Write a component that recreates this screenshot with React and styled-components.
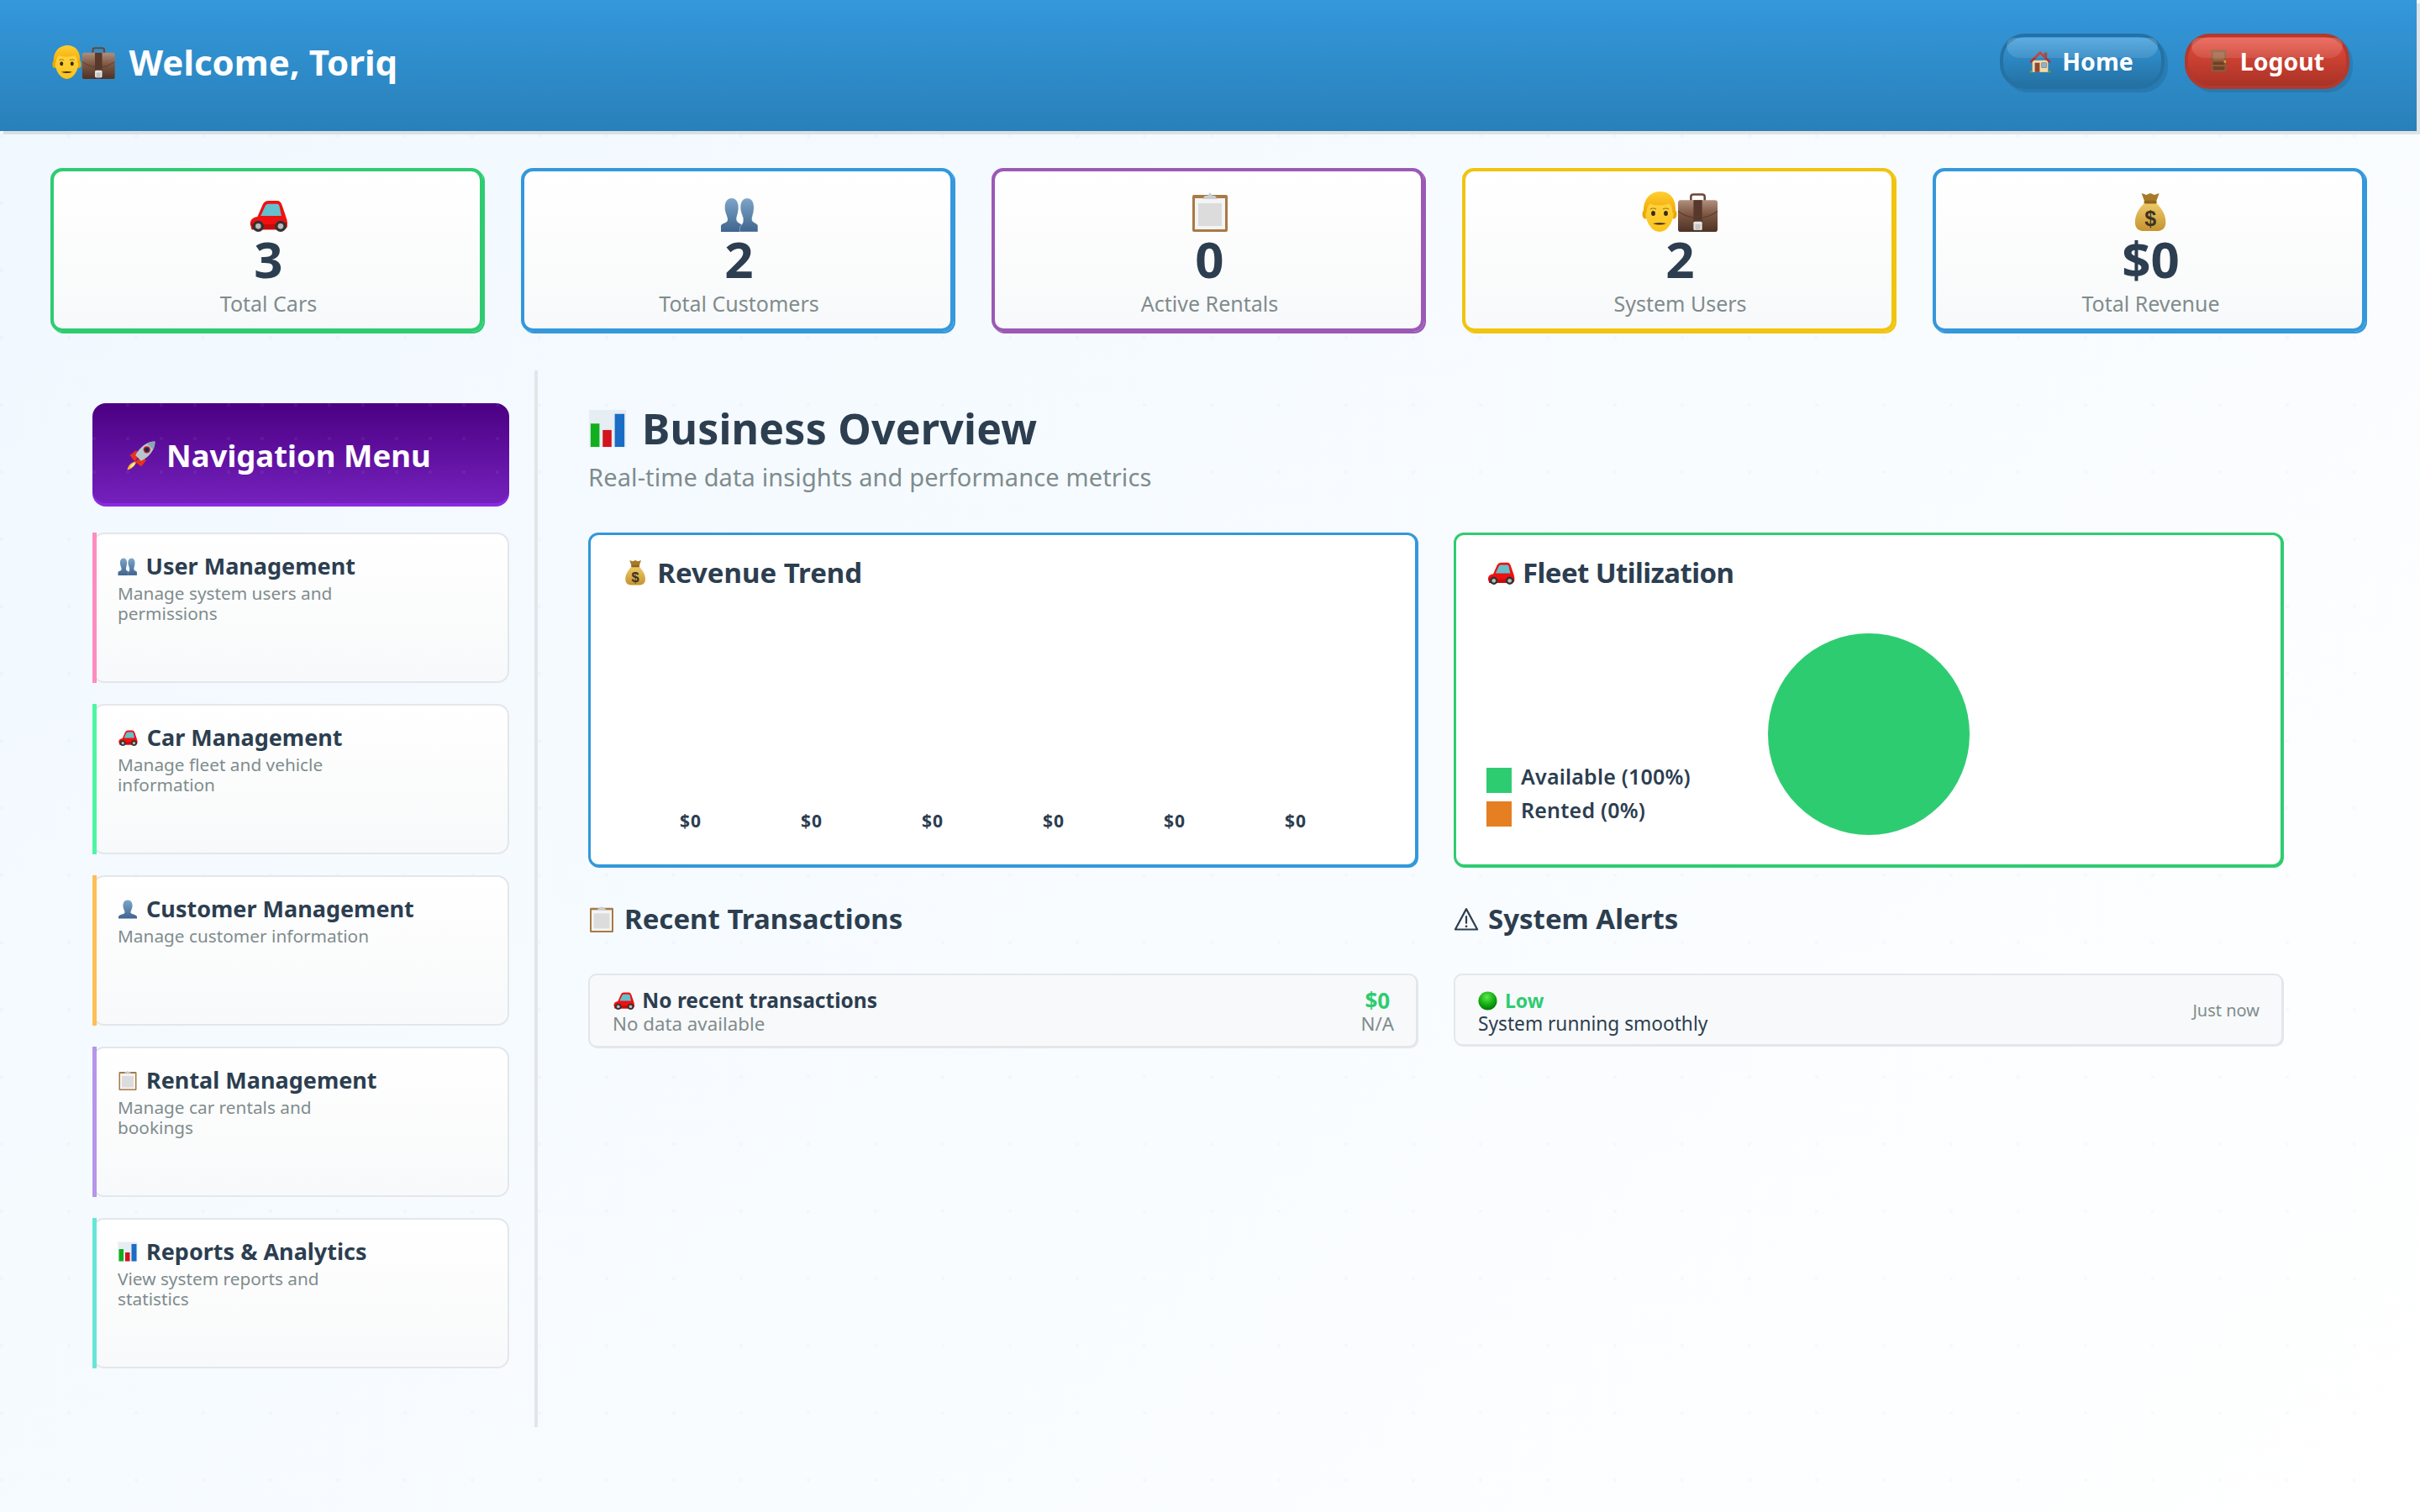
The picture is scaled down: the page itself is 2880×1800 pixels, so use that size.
import React from "react";
import styled, { createGlobalStyle } from "styled-components";

const GlobalStyle = createGlobalStyle`
  html, body {
    margin: 0;
    padding: 0;
    overflow: hidden;
  }
  body {
    font-family: "Noto Sans", "DejaVu Sans", sans-serif;
    color: #2c3e50;
    background-color: #f8fbff;
    background-image:
      radial-gradient(circle at 2px 2px, rgba(44, 62, 80, 0.025) 2px, transparent 2.5px),
      linear-gradient(135deg, #f0f8ff 0%, #ffffff 100%);
    background-size: 80px 80px, 100% 100%;
    background-repeat: repeat, no-repeat;
  }
`;

const Page = styled.div`
  width: 2876px;
  height: 1800px;
`;

const Header = styled.header`
  height: 156px;
  box-sizing: border-box;
  padding: 0 80px 8px 60px;
  display: flex;
  align-items: center;
  justify-content: space-between;
  background: linear-gradient(180deg, #3498db 0%, #2980b9 100%);
  box-shadow: 4px 4px 0 rgba(0, 0, 0, 0.1);
`;

const Welcome = styled.h1`
  margin: 0;
  display: flex;
  align-items: center;
  color: #fff;
  font-size: 42px;
  font-weight: 700;
  line-height: 60px;
  letter-spacing: 0;
`;

const WelcomeIcons = styled.span`
  display: flex;
  align-items: flex-end;
  margin-left: 2px;
  margin-right: 16px;
`;

const HeaderButtons = styled.div`
  display: flex;
  gap: 24px;
  margin-top: -3px;
`;

const HeadButton = styled.button`
  position: relative;
  width: 196px;
  height: 66px;
  box-sizing: border-box;
  display: flex;
  align-items: center;
  justify-content: center;
  gap: 12px;
  padding: 0 3px 0 0;
  border: 4px solid ${(p) => p.$edge};
  border-radius: 30px;
  background: linear-gradient(180deg, ${(p) => p.$from} 0%, ${(p) => p.$to} 100%);
  box-shadow: 4px 4px 0 rgba(0, 0, 0, 0.1);
  color: #fff;
  font-family: inherit;
  font-size: 28.5px;
  font-weight: 700;
  overflow: visible;

  &::before {
    content: "";
    position: absolute;
    top: 1px;
    left: 4px;
    right: 4px;
    height: 24px;
    border-radius: 24px 24px 40px 40px;
    background: linear-gradient(180deg, rgba(255, 255, 255, 0.2), rgba(255, 255, 255, 0.1));
  }
`;

const StatsRow = styled.section`
  margin: 44px 0 0;
  padding: 0 61px 0 60px;
  display: grid;
  grid-template-columns: repeat(5, 1fr);
  gap: 45px;
`;

const StatCard = styled.div`
  height: 195px;
  box-sizing: border-box;
  padding: 24px 0 0 4px;
  display: flex;
  flex-direction: column;
  align-items: center;
  border: 4px solid ${(p) => p.$color};
  border-radius: 14px;
  background: linear-gradient(180deg, #ffffff 0%, #f8f9fa 100%);
  box-shadow: 2px 2px 0 ${(p) => p.$color};
`;

const StatIcon = styled.div`
  height: 48px;
  display: flex;
  align-items: flex-end;
  justify-content: center;
`;

const StatValue = styled.div`
  margin-top: 2px;
  font-size: 60px;
  line-height: 60px;
  font-weight: 700;
  color: #2c3e50;
`;

const StatLabel = styled.div`
  margin-top: 8px;
  font-size: 25px;
  line-height: 30px;
  color: #7f8c8d;
`;

const Content = styled.div`
  margin-top: 46px;
  padding-left: 60px;
  display: flex;
`;

const Sidebar = styled.aside`
  width: 580px;
  height: 1258px;
  box-sizing: border-box;
  padding: 39px 30px 0 50px;
  border-right: 4px solid #e2e5e9;
  display: flex;
  flex-direction: column;
  gap: 25px;
`;

const NavHeader = styled.div`
  height: 123px;
  box-sizing: border-box;
  margin-bottom: 6px;
  padding-left: 40px;
  display: flex;
  align-items: center;
  gap: 12px;
  border-radius: 16px;
  color: #fff;
  font-size: 36.5px;
  font-weight: 700;
  background-color: #4b0082;
  background-image:
    radial-gradient(circle at 2px 2px, rgba(255, 255, 255, 0.05) 2px, transparent 2.5px),
    linear-gradient(180deg, #4b0082 0%, #7622bf 100%);
  background-size: 40px 40px, 100% 100%;
  box-shadow: inset 0 -4px 0 #8a2be2;
`;

const NavCard = styled.a`
  position: relative;
  height: 179px;
  box-sizing: border-box;
  padding: 21px 28px 0;
  display: block;
  border: 2px solid #e4e6ea;
  border-radius: 14px;
  background: linear-gradient(180deg, #ffffff 0%, #f8f9fa 100%);

  &::before {
    content: "";
    position: absolute;
    left: -2px;
    top: -2px;
    bottom: -2px;
    width: 5px;
    background: ${(p) => p.$bar};
  }
`;

const NavTitle = styled.div`
  display: flex;
  align-items: center;
  gap: 10px;
  height: 34px;
  font-size: 27px;
  line-height: 34px;
  font-weight: 700;
  color: #2c3e50;
`;

const NavDesc = styled.div`
  margin-top: 3px;
  max-width: 320px;
  font-size: 20.8px;
  line-height: 24px;
  color: #7f8c8d;
`;

const Main = styled.main`
  width: 2017px;
  margin-left: 60px;
  padding-top: 39px;
`;

const PageTitle = styled.h2`
  margin: 0;
  display: flex;
  align-items: center;
  gap: 18px;
  font-size: 50px;
  line-height: 60px;
  font-weight: 700;
  color: #2c3e50;
  letter-spacing: 0.2px;
`;

const PageSub = styled.p`
  margin: 8px 0 0;
  font-size: 29px;
  line-height: 40px;
  color: #7f8c8d;
  letter-spacing: 0.12px;
`;

const TwoCols = styled.div`
  margin-top: ${(p) => p.$top}px;
  display: grid;
  grid-template-columns: 1fr 1fr;
  gap: 43px;
`;

const ChartCard = styled.div`
  height: 398px;
  box-sizing: border-box;
  padding: 23px 0 0;
  display: flex;
  flex-direction: column;
  border: 3px solid ${(p) => p.$color};
  border-radius: 12px;
  background: #fff;
  box-shadow: 1px 1px 0 ${(p) => p.$color};
`;

const ChartTitle = styled.h3`
  margin: 0;
  padding-left: ${(p) => p.$left}px;
  display: flex;
  align-items: center;
  gap: ${(p) => p.$gap}px;
  height: 44px;
  font-size: 33px;
  line-height: 44px;
  font-weight: 700;
  color: #2c3e50;
  letter-spacing: ${(p) => p.$tight || 0}px;
`;

const BarLabels = styled.div`
  flex: 1;
  padding: 0 70px 38px 47px;
  display: grid;
  grid-template-columns: repeat(6, 1fr);
  align-items: end;
  justify-items: center;
  font-size: 21px;
  line-height: 28px;
  font-weight: 700;
  letter-spacing: 1px;
`;

const PieArea = styled.div`
  margin-top: 50px;
  padding: 0 36px;
  display: grid;
  grid-template-columns: 1fr 240px 1fr;
`;

const Legend = styled.div`
  align-self: end;
  margin-bottom: 10px;
  display: flex;
  flex-direction: column;
  gap: 10px;
`;

const LegendRow = styled.div`
  display: flex;
  gap: 11px;
  font-size: 25px;
  line-height: 21px;
  font-weight: 600;
  letter-spacing: 0.2px;
`;

const Swatch = styled.span`
  width: 30px;
  height: 30px;
  background: ${(p) => p.$color};
`;

const Pie = styled.div`
  width: 240px;
  height: 240px;
  border-radius: 50%;
  background: #2ecc71;
`;

const SectionTitle = styled.h3`
  margin: 0 0 43px;
  display: flex;
  align-items: center;
  gap: 11px;
  height: 44px;
  font-size: 33px;
  line-height: 44px;
  font-weight: 700;
  color: #2c3e50;
`;

const ListItem = styled.div`
  height: ${(p) => p.$h}px;
  box-sizing: border-box;
  padding: 16px 26px 0 27px;
  display: flex;
  justify-content: space-between;
  border: 2px solid #e3e6ea;
  border-radius: 10px;
  background: #f8f9fa;
  box-shadow: 1px 1px 0 #e3e6ea;
`;

const ItemHead = styled.div`
  display: flex;
  align-items: center;
  gap: ${(p) => p.$gap}px;
  height: 28px;
  font-size: ${(p) => p.$size}px;
  line-height: 28px;
  font-weight: 700;
  color: ${(p) => p.$color || "#2c3e50"};
`;

const ItemSub = styled.div`
  font-size: ${(p) => p.$size || 22.3}px;
  line-height: 28px;
  color: ${(p) => p.$color || "#7f8c8d"};
`;

const ItemRight = styled.div`
  text-align: center;
`;

const Amount = styled.div`
  font-size: 26px;
  line-height: 28px;
  font-weight: 700;
  color: #2ecc71;
`;

const ItemTime = styled.div`
  align-self: center;
  margin-top: -16px;
  font-size: 20px;
  color: #7f8c8d;
`;

/* emoji drawings. h is the height on the page, vb the drawing box, the width follows from it */
function Svg({ h = 48, vb = [0, 0, 48, 48], children }) {
  return (
    <svg
      width={(h * vb[2]) / vb[3]}
      height={h}
      viewBox={vb.join(" ")}
      preserveAspectRatio="none"
      style={{ flexShrink: 0 }}
    >
      {children}
    </svg>
  );
}

function Man({ h = 48 }) {
  return (
    <Svg h={h} vb={[0, 0, 42, 48]}>
      <defs>
        <linearGradient id="manFace" x1="0" y1="0" x2="0" y2="1">
          <stop offset="0" stopColor="#ffd84a" />
          <stop offset="1" stopColor="#fcc21b" />
        </linearGradient>
        <linearGradient id="manHair" x1="0" y1="0" x2="0" y2="1">
          <stop offset="0" stopColor="#ffcf33" />
          <stop offset="1" stopColor="#f0a500" />
        </linearGradient>
      </defs>
      <ellipse cx="4" cy="27" rx="3.5" ry="5.5" fill="#eba70a" />
      <ellipse cx="38" cy="27" rx="3.5" ry="5.5" fill="#eba70a" />
      <path d="M4 22C4 37 12 48 21 48S38 37 38 22C38 10 31 4 21 4S4 10 4 22Z" fill="url(#manFace)" />
      <path d="M2.500 27C0 11 9 0 22 0C35 0 42 11 39.500 27L36.500 25C36.500 20 35 16.500 32.500 14.500C25 17 15 17 9.500 14.500C7 17 5.500 21 5.500 25Z" fill="url(#manHair)" />
      <ellipse cx="13.500" cy="26" rx="2.400" ry="3" fill="#3a2a10" />
      <ellipse cx="28.500" cy="26" rx="2.400" ry="3" fill="#3a2a10" />
      <path d="M10 21Q13.500 19 17 21M25 21Q28.500 19 32 21" stroke="#a8740e" strokeWidth="1.200" fill="none" />
      <path d="M13 38Q21 41 29 38Q21 36.500 13 38Z" fill="#3a2a10" />
    </Svg>
  );
}

function Briefcase({ h = 46 }) {
  return (
    <Svg h={h} vb={[0, 3, 48, 45]}>
      <defs>
        <linearGradient id="caseBody" x1="0" y1="0" x2="0" y2="1">
          <stop offset="0" stopColor="#b08f7c" />
          <stop offset="0.45" stopColor="#7d5743" />
          <stop offset="1" stopColor="#4e3226" />
        </linearGradient>
      </defs>
      <path d="M16 12V7Q16 4.500 19 4.500H29Q32 4.500 32 7V12" fill="none" stroke="#6a4636" strokeWidth="2.500" />
      <rect x="1" y="11" width="46" height="37" rx="3" fill="url(#caseBody)" />
      <path d="M1 24Q24 40 47 24" stroke="#5a3a2b" strokeWidth="1" fill="none" />
      <rect x="19" y="11" width="10" height="26" fill="#57382a" />
      <rect x="19" y="36" width="10" height="10" rx="1.500" fill="#e6e6e6" />
      <rect x="21" y="39" width="6" height="7" fill="#c4c4c4" />
    </Svg>
  );
}

function Car({ h = 38 }) {
  return (
    <Svg h={h} vb={[0, 2, 52, 40]}>
      <path d="M3 32C3 25 8 24 12 23L19 7Q21 3 26 3H37Q41 3 43 9L48 24Q50 28 49 36L46 39H5Z" fill="#ef1111" />
      <path d="M16 22L22 9Q23 7 26 7H37Q39 7 39.500 10L42 22Z" fill="#66bfcc" />
      <path d="M3 31Q25 35 49 30V36L46 39H5Z" fill="#c50c0c" />
      <circle cx="13" cy="35" r="7" fill="#333" />
      <circle cx="13" cy="35" r="3.500" fill="#bbb" />
      <circle cx="41" cy="35" r="7" fill="#333" />
      <circle cx="41" cy="35" r="3.500" fill="#bbb" />
    </Svg>
  );
}

function Busts({ h = 41 }) {
  return (
    <Svg h={h} vb={[0, 6, 47, 42]}>
      <defs>
        <linearGradient id="bustFill" x1="0" y1="0" x2="0" y2="1">
          <stop offset="0" stopColor="#7da6c9" />
          <stop offset="1" stopColor="#3f648e" />
        </linearGradient>
      </defs>
      <path d="M14 7C20 7 23 13 22 21C21.500 27 19 31 20 34C21 37 25 38 27 40V48H1V40C4 37 9 37 9 34C10 31 7 27 6 21C5 13 8 7 14 7Z" fill="url(#bustFill)" />
      <path d="M33 7C39 7 42 13 41 21C40.500 27 38 31 39 34C40 37 44 37 46 40V48H24V43C25 40 29 37 28 34C29 31 26 27 25 21C24 13 27 7 33 7Z" fill="url(#bustFill)" stroke="#eaf1f7" strokeWidth="0.400" />
    </Svg>
  );
}

function Bust({ h = 24 }) {
  return (
    <Svg h={h}>
      <defs>
        <linearGradient id="oneBust" x1="0" y1="0" x2="0" y2="1">
          <stop offset="0" stopColor="#7da6c9" />
          <stop offset="1" stopColor="#3f648e" />
        </linearGradient>
      </defs>
      <path d="M24 3C32 3 36 10 35 19C34 26 30 30 31 33C33 37 43 37 46 42V47H2V42C5 37 15 37 17 33C18 30 14 26 13 19C12 10 16 3 24 3Z" fill="url(#oneBust)" />
    </Svg>
  );
}

function Clipboard({ h = 48 }) {
  return (
    <Svg h={h}>
      <rect x="3" y="4" width="42" height="44" rx="2" fill="#a87a45" />
      <rect x="6" y="8" width="36" height="37" fill="#f4f4f4" />
      <rect x="10" y="14" width="28" height="27" fill="#dcdcdc" />
      <path d="M15 9L18 5H21L24 1L27 5H30L33 9Z" fill="#c9ced3" />
    </Svg>
  );
}

function MoneyBag({ h = 46 }) {
  return (
    <Svg h={h} vb={[3, 0, 42, 48]}>
      <defs>
        <linearGradient id="bagFill" x1="0" y1="0" x2="0" y2="1">
          <stop offset="0" stopColor="#f0cb6a" />
          <stop offset="1" stopColor="#c5932f" />
        </linearGradient>
      </defs>
      <path d="M13 0L19 2L24 0L29 2L35 0L31 11H17Z" fill="#a87a28" />
      <path d="M17 11H31C34 16 43 23 43 36C43 44 38 47 32 47H16C10 47 5 44 5 36C5 23 14 16 17 11Z" fill="url(#bagFill)" />
      <rect x="16" y="9" width="16" height="4" rx="2" fill="#8d6620" />
      <text x="24" y="41" textAnchor="middle" fontFamily="Liberation Sans, sans-serif" fontSize="26" fontWeight="700" fill="#3a3325">$</text>
    </Svg>
  );
}

function Rocket({ h = 36 }) {
  return (
    <Svg h={h}>
      <path d="M6 24L16 16L22 22L14 34Z" fill="#e8321c" />
      <path d="M24 42L32 32L26 26L14 34Z" fill="#e8321c" />
      <path d="M14 34C6 36 3 42 2 47C8 46 12 43 16 36Z" fill="#ffb52e" />
      <path d="M13 36C9 38 7 41 6 44C9 43 12 41 14 38Z" fill="#fff1a8" />
      <path d="M46 2C34 2 22 10 15 24L24 33C38 26 46 14 46 2Z" fill="#b8c5cf" />
      <path d="M46 2C40 2 36 3.500 33 5L43 15C45 11 46 7 46 2Z" fill="#8da4b5" />
      <circle cx="33" cy="15" r="5.500" fill="#c21f1f" />
      <circle cx="33" cy="15" r="3.500" fill="#172b4d" />
    </Svg>
  );
}

function BarChart({ h = 48 }) {
  return (
    <Svg h={h}>
      <rect x="1" y="1" width="46" height="46" fill="#e6edf3" />
      <rect x="3" y="18" width="11" height="29" fill="#11ae1d" />
      <rect x="18" y="26" width="11" height="21" fill="#d3141c" />
      <rect x="33" y="6" width="12" height="41" fill="#1a6dc4" />
    </Svg>
  );
}

function House({ h = 28 }) {
  return (
    <Svg h={h}>
      <rect x="8" y="22" width="32" height="24" fill="#f4d9a8" />
      <path d="M2 25L24 3L46 25L42 27L24 10L6 27Z" fill="#b5302a" />
      <rect x="32" y="6" width="6" height="10" fill="#8a3a30" />
      <rect x="13" y="27" width="10" height="19" fill="#8d4a35" />
      <rect x="27" y="27" width="10" height="10" fill="#7fb6d8" stroke="#8d6a4a" strokeWidth="1" />
      <rect x="3" y="43" width="5" height="4" fill="#6aa42a" />
      <rect x="40" y="43" width="5" height="4" fill="#6aa42a" />
    </Svg>
  );
}

function Door({ h = 27 }) {
  return (
    <Svg h={h}>
      <rect x="8" y="1" width="32" height="46" fill="#8f5a3a" />
      <rect x="12" y="5" width="24" height="17" fill="#a4684a" />
      <rect x="12" y="26" width="24" height="6" fill="#6e4128" />
      <rect x="12" y="36" width="24" height="7" fill="#6e4128" />
      <rect x="35" y="23" width="4" height="5" fill="#e0a92c" />
    </Svg>
  );
}

function GreenDot({ h = 23 }) {
  return (
    <Svg h={h}>
      <defs>
        <radialGradient id="dotFill" cx="0.45" cy="0.3" r="0.75">
          <stop offset="0" stopColor="#5fe84f" />
          <stop offset="0.6" stopColor="#0ea80e" />
          <stop offset="1" stopColor="#066d06" />
        </radialGradient>
      </defs>
      <circle cx="24" cy="24" r="23" fill="url(#dotFill)" />
    </Svg>
  );
}

function Warning({ h = 30 }) {
  return (
    <Svg h={h}>
      <path d="M24 5L45 44H3Z" fill="none" stroke="#2c3e50" strokeWidth="3.500" strokeLinejoin="round" />
      <path d="M24 18V33" stroke="#2c3e50" strokeWidth="3.500" />
      <circle cx="24" cy="38" r="2.200" fill="#2c3e50" />
    </Svg>
  );
}

const stats = [
  { color: "#2ecc71", value: "3", label: "Total Cars", icon: <Car /> },
  { color: "#3498db", value: "2", label: "Total Customers", icon: <Busts /> },
  { color: "#9b59b6", value: "0", label: "Active Rentals", icon: <Clipboard /> },
  { color: "#f1c40f", value: "2", label: "System Users", icon: <><Man /><Briefcase /></> },
  { color: "#3498db", value: "$0", label: "Total Revenue", icon: <MoneyBag /> },
];

const navItems = [
  { bar: "#ff8cc0", icon: <Busts h={21} />, title: "User Management", desc: "Manage system users and permissions" },
  { bar: "#4ff5a4", icon: <Car h={19} />, title: "Car Management", desc: "Manage fleet and vehicle information" },
  { bar: "#ffbe55", icon: <Bust />, title: "Customer Management", desc: "Manage customer information" },
  { bar: "#b596ea", icon: <Clipboard h={24} />, title: "Rental Management", desc: "Manage car rentals and bookings" },
  { bar: "#66e6d8", icon: <BarChart h={24} />, title: "Reports & Analytics", desc: "View system reports and statistics" },
];

export default function App() {
  return (
    <Page>
      <GlobalStyle />
      <Header>
        <Welcome>
          <WelcomeIcons>
            <Man h={40} />
            <Briefcase h={38} />
          </WelcomeIcons>
          Welcome, Toriq
        </Welcome>
        <HeaderButtons>
          <HeadButton $edge="#2471a3" $from="#3498db" $to="#2471a3">
            <House />
            Home
          </HeadButton>
          <HeadButton $edge="#b03a2e" $from="#e74c3c" $to="#a93226">
            <Door />
            Logout
          </HeadButton>
        </HeaderButtons>
      </Header>

      <StatsRow>
        {stats.map((s) => (
          <StatCard key={s.label} $color={s.color}>
            <StatIcon>{s.icon}</StatIcon>
            <StatValue>{s.value}</StatValue>
            <StatLabel>{s.label}</StatLabel>
          </StatCard>
        ))}
      </StatsRow>

      <Content>
        <Sidebar>
          <NavHeader>
            <Rocket />
            Navigation Menu
          </NavHeader>
          {navItems.map((n) => (
            <NavCard key={n.title} $bar={n.bar}>
              <NavTitle>
                {n.icon}
                {n.title}
              </NavTitle>
              <NavDesc>{n.desc}</NavDesc>
            </NavCard>
          ))}
        </Sidebar>

        <Main>
          <PageTitle>
            <BarChart h={46} />
            Business Overview
          </PageTitle>
          <PageSub>Real-time data insights and performance metrics</PageSub>

          <TwoCols $top={46}>
            <ChartCard $color="#3498db">
              <ChartTitle $left={40} $gap={13}>
                <MoneyBag h={30} />
                Revenue Trend
              </ChartTitle>
              <BarLabels>
                {[0, 1, 2, 3, 4, 5].map((i) => (
                  <span key={i}>$0</span>
                ))}
              </BarLabels>
            </ChartCard>
            <ChartCard $color="#2ecc71">
              <ChartTitle $left={36} $gap={8} $tight={-0.6}>
                <Car h={27} />
                Fleet Utilization
              </ChartTitle>
              <PieArea>
                <Legend>
                  <LegendRow>
                    <Swatch $color="#2ecc71" />
                    Available (100%)
                  </LegendRow>
                  <LegendRow>
                    <Swatch $color="#e67e22" />
                    Rented (0%)
                  </LegendRow>
                </Legend>
                <Pie />
              </PieArea>
            </ChartCard>
          </TwoCols>

          <TwoCols $top={40}>
            <div>
              <SectionTitle>
                <Clipboard h={32} />
                Recent Transactions
              </SectionTitle>
              <ListItem $h={88}>
                <div>
                  <ItemHead $size={24.5} $gap={8}>
                    <Car h={21} />
                    No recent transactions
                  </ItemHead>
                  <ItemSub>No data available</ItemSub>
                </div>
                <ItemRight>
                  <Amount>$0</Amount>
                  <ItemSub>N/A</ItemSub>
                </ItemRight>
              </ListItem>
            </div>
            <div>
              <SectionTitle>
                <Warning />
                System Alerts
              </SectionTitle>
              <ListItem $h={86}>
                <div>
                  <ItemHead $color="#2ecc71" $size={23} $gap={9}>
                    <GreenDot />
                    Low
                  </ItemHead>
                  <ItemSub $color="#2c3e50" $size={22.7}>System running smoothly</ItemSub>
                </div>
                <ItemTime>Just now</ItemTime>
              </ListItem>
            </div>
          </TwoCols>
        </Main>
      </Content>
    </Page>
  );
}
